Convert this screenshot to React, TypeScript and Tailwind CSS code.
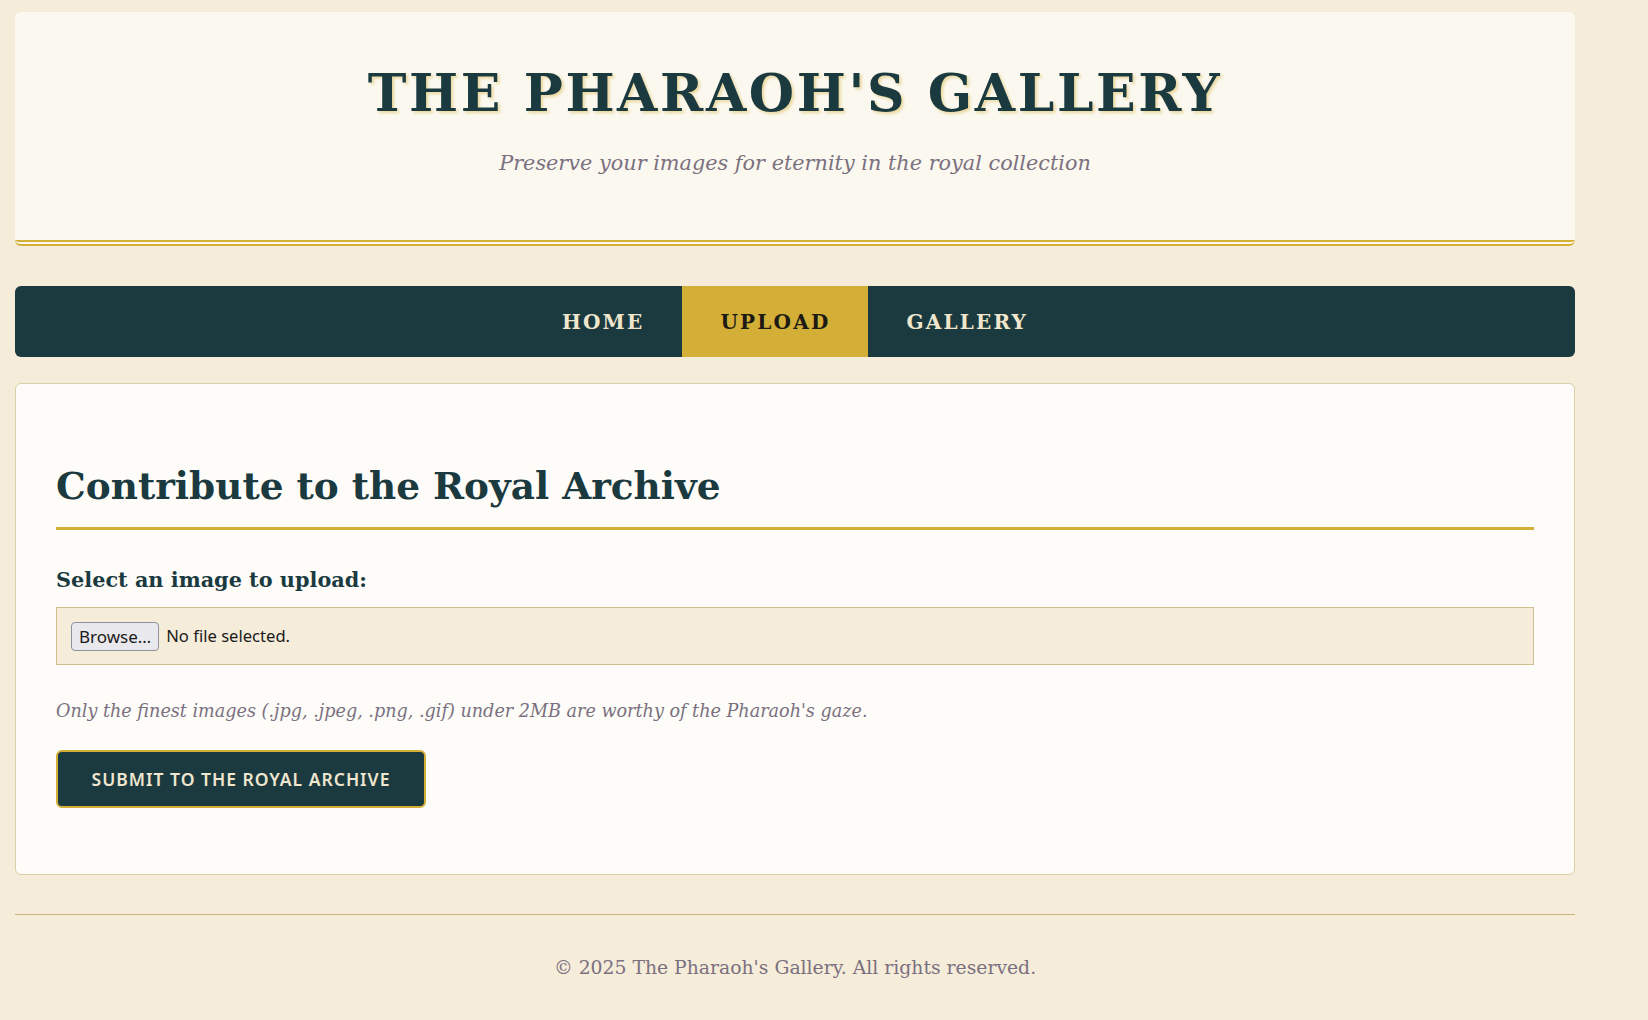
import React from "react";

const navItems = [
  { label: "HOME", active: false },
  { label: "UPLOAD", active: true },
  { label: "GALLERY", active: false },
];

const serif = "font-['DejaVu_Serif','Liberation_Serif',serif]";
const sans = "font-['Noto_Sans','DejaVu_Sans',sans-serif]";

export default function App() {
  return (
    <div className={`min-h-screen bg-[#f5ecd9] pt-[12px] ${serif}`}>
      <div className="ml-[15px] w-[1560px]">
        {/* Header */}
        <header className="rounded-[6px] bg-[#fbf8ef] border-b-[6px] border-double border-[#d4af37] pt-[51px] pb-[65px] text-center">
          <h1 className="text-[52px] leading-[60px] font-bold tracking-[2.6px] text-[#1b3a40] [text-shadow:2px_2px_3px_rgba(212,175,55,0.45)]">
            THE PHARAOH'S GALLERY
          </h1>
          <p className="mt-[28px] text-[20.8px] leading-[24px] italic text-[#7b7080]">
            Preserve your images for eternity in the royal collection
          </p>
        </header>

        {/* Nav */}
        <nav className="mt-[40px] h-[71px] rounded-[6px] bg-[#1b3a40] flex justify-center overflow-hidden">
          {navItems.map((item) => (
            <a
              key={item.label}
              href="#"
              className={`h-full flex items-center px-[38px] text-[20px] font-bold tracking-[2.2px] ${
                item.active ? "bg-[#d4af37] text-[#1c1a12]" : "text-[#f0e6cc]"
              }`}
            >
              {item.label}
            </a>
          ))}
        </nav>

        {/* Upload card */}
        <main className="mt-[26px] rounded-[6px] border border-[#dccfa5] bg-[#fdfcf8] px-[40px] pt-[40px] pb-[66px]">
          <h2 className="mt-[40px] pb-[19px] border-b-[3px] border-[#d4af37] text-[37.4px] leading-[44px] font-bold text-[#1b3a40]">
            Contribute to the Royal Archive
          </h2>

          <form className="mt-[38px]" onSubmit={(e) => e.preventDefault()}>
            <label className="block text-[20.8px] leading-[24px] font-bold text-[#1b3a40]">
              Select an image to upload:
            </label>
            <div className={`mt-[15px] border border-[#cfbf8f] bg-[#f5ecd9] px-[14px] pt-[14px] pb-[13px] flex items-center ${sans}`}>
              <span className="h-[29px] flex items-center px-[7px] rounded-[4px] border border-[#8f8f9d] bg-[#e9e9ed] text-[17px] text-[#1b1b1b]">
                Browse…
              </span>
              <span className="ml-[7px] text-[16.6px] text-[#1b1b1b]">No file selected.</span>
            </div>

            <p className="mt-[34px] text-[17.6px] leading-[24px] italic text-[#7b7080]">
              Only the finest images (.jpg, .jpeg, .png, .gif) under 2MB are worthy of the Pharaoh's gaze.
            </p>

            <button
              type="submit"
              className={`mt-[27px] w-[370px] h-[58px] rounded-[6px] border-2 border-[#d4af37] bg-[#1b3a40] text-[17.5px] font-semibold tracking-[1px] text-[#efe6cf] ${sans}`}
            >
              SUBMIT TO THE ROYAL ARCHIVE
            </button>
          </form>
        </main>

        {/* Footer */}
        <footer className="mt-[39px] border-t border-[#c9b37e] pt-[41px] pb-[41px] text-center">
          <p className="text-[18.8px] leading-[24px] text-[#7b7080]">
            © 2025 The Pharaoh's Gallery. All rights reserved.
          </p>
        </footer>
      </div>
    </div>
  );
}
